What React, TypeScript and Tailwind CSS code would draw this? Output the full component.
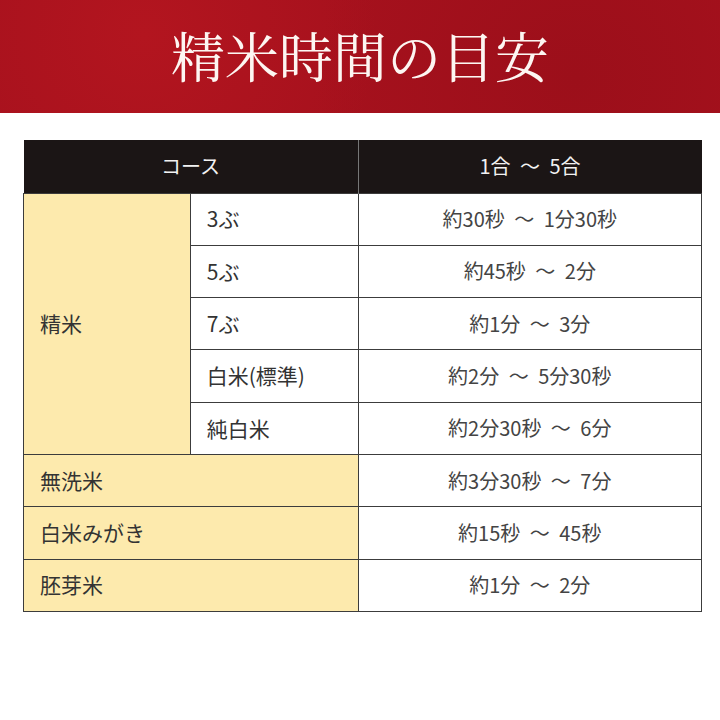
import React from 'react';

const jp = { fontFamily: "'Noto Sans CJK JP', 'Noto Sans', sans-serif" };

const rows: { sub?: string; label?: string; time: string }[] = [
  { sub: '3ぶ', time: '約30秒 ～ 1分30秒' },
  { sub: '5ぶ', time: '約45秒 ～ 2分' },
  { sub: '7ぶ', time: '約1分 ～ 3分' },
  { sub: '白米(標準)', time: '約2分 ～ 5分30秒' },
  { sub: '純白米', time: '約2分30秒 ～ 6分' },
  { label: '無洗米', time: '約3分30秒 ～ 7分' },
  { label: '白米みがき', time: '約15秒 ～ 45秒' },
  { label: '胚芽米', time: '約1分 ～ 2分' },
];

export default function App() {
  return (
    <div className="w-[720px] h-[720px] bg-white" style={jp}>
      {/* banner */}
      <div className="h-[113px] flex items-center justify-center bg-[#a6111d] bg-[radial-gradient(circle_at_20%_30%,#b3151f_0%,transparent_40%),radial-gradient(circle_at_80%_70%,#9c0f1a_0%,transparent_45%)]">
        <h1
          className="text-[54px] leading-none text-[#fdf6f2] tracking-[0px] -mt-[4px]"
          style={{ fontFamily: "'Noto Serif CJK JP', 'Noto Sans CJK JP', serif" }}
        >
          精米時間の目安
        </h1>
      </div>

      <div className="pt-[27px] px-[23px] pr-[18px]">
        <table className="w-[679px] border-collapse text-[21px] text-[#333]">
          <colgroup>
            <col className="w-[167px]" />
            <col className="w-[168px]" />
            <col className="w-[344px]" />
          </colgroup>
          <thead>
            <tr className="h-[53px] bg-[#1b1515] text-[#f2f2f2] text-[20px]">
              <th colSpan={2} className="font-normal border-r-[1.5px] border-[#777]">コース</th>
              <th className="font-normal [word-spacing:5px]">1合 ～ 5合</th>
            </tr>
          </thead>
          <tbody>
            {rows.map((r, i) => (
              <tr key={i} className="h-[52.3px]">
                {i === 0 && (
                  <td rowSpan={5} className="bg-[#fdeaad] border-[1.5px] border-[#3c3c3c] pl-[16px] align-middle">
                    精米
                  </td>
                )}
                {r.sub && (
                  <td className="bg-white border-[1.5px] border-[#3c3c3c] pl-[16px]">{r.sub}</td>
                )}
                {r.label && (
                  <td colSpan={2} className="bg-[#fdeaad] border-[1.5px] border-[#3c3c3c] pl-[16px]">
                    {r.label}
                  </td>
                )}
                <td className="bg-white border-[1.5px] border-[#3c3c3c] text-center text-[20px] text-[#444] [word-spacing:5px]">
                  {r.time}
                </td>
              </tr>
            ))}
          </tbody>
        </table>
      </div>
    </div>
  );
}
